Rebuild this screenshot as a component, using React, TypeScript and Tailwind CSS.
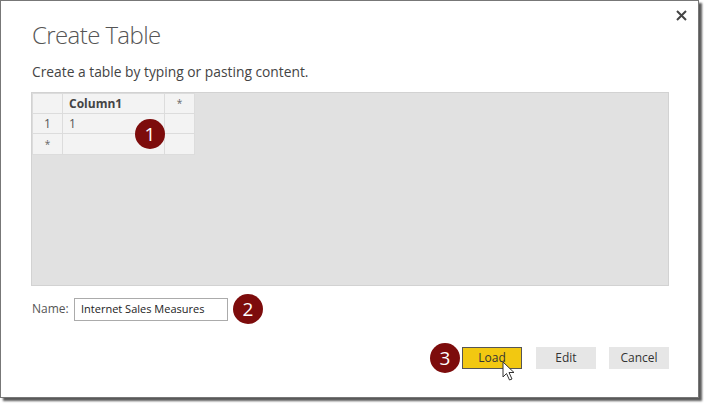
import React from "react";

function Badge({ n }: { n: string }) {
  return (
    <div className="w-[30px] h-[30px] rounded-full bg-[#7d0c0c] text-white flex items-center justify-center text-[19px] leading-none font-['Open_Sans',sans-serif]">
      {n}
    </div>
  );
}

export default function App() {
  const cell = "bg-[#f3f3f3] border-r border-b border-[#dcdcdc] flex items-center";
  return (
    <div className="w-[704px] h-[404px] bg-white font-['Open_Sans',sans-serif]">
      <div className="relative w-[699px] h-[398px] border border-[#777] shadow-[3px_3px_2px_rgba(0,0,0,0.65)] bg-white flex flex-col pl-[30px] pr-[29px]">
        <button className="absolute right-[10px] top-[7px] w-[14px] h-[14px] flex items-center justify-center">
          <svg width="11" height="11" viewBox="0 0 11 11">
            <path d="M1 1 L10 10 M10 1 L1 10" stroke="#444" strokeWidth="2" />
          </svg>
        </button>
        <div className="mt-[18px] ml-[1px] text-[24px] leading-[32px] font-light text-[#555] tracking-[-0.6px]">Create Table</div>
        <div className="mt-[12px] ml-[1px] text-[13.8px] leading-[18px] text-[#444]">Create a table by typing or pasting content.</div>
        <div className="relative mt-[11px] h-[194px] bg-[#e1e1e1] border border-[#d2d2d2]">
          <div className="grid grid-cols-[30px_102px_30px] grid-rows-[20px_20px_21px] w-fit border-l border-t border-[#dcdcdc] text-[12px] text-[#555]">
            <div className={cell}></div>
            <div className={cell + " pl-[6px] font-bold text-[#444]"}>Column1</div>
            <div className={cell + " justify-center text-[10px] text-[#666]"}>*</div>
            <div className={cell + " justify-center"}>1</div>
            <div className={cell + " pl-[6px]"}>1</div>
            <div className={cell}></div>
            <div className={cell + " justify-center text-[10px] text-[#666]"}>*</div>
            <div className={cell}></div>
            <div className={cell}></div>
          </div>
          <div className="absolute left-[103px] top-[26px]">
            <Badge n="1" />
          </div>
        </div>
        <div className="mt-[8px] ml-[1px] flex items-center">
          <span className="text-[12px] text-[#555] w-[42px]">Name:</span>
          <div className="w-[154px] h-[23px] border border-[#ababab] flex items-center pl-[6px] text-[11px] text-[#222]">Internet Sales Measures</div>
          <div className="ml-[5px]">
            <Badge n="2" />
          </div>
        </div>
        <div className="mt-[19px] flex items-center justify-end">
          <Badge n="3" />
          <div className="relative ml-[2px] w-[60px] h-[22px] bg-[#f2c811] border border-[#555] flex items-center justify-center text-[12px] text-[#333]">
            Load
            <svg className="absolute left-[39px] top-[13px]" width="14" height="21" viewBox="0 0 14 21">
              <path d="M1 1 L1 16 L4.5 12.5 L7.5 19 L10 18 L7 11.5 L12 11.5 Z" fill="white" stroke="#333" strokeWidth="1" strokeLinejoin="round" />
            </svg>
          </div>
          <div className="ml-[14px] w-[60px] h-[22px] bg-[#e6e6e6] flex items-center justify-center text-[12px] text-[#333]">Edit</div>
          <div className="ml-[13px] w-[60px] h-[22px] bg-[#e6e6e6] flex items-center justify-center text-[12px] text-[#333]">Cancel</div>
        </div>
      </div>
    </div>
  );
}
